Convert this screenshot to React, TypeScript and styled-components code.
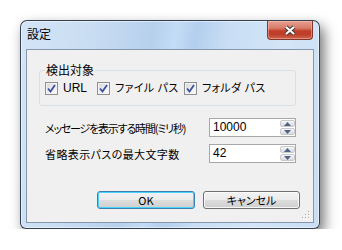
import React from 'react';
import styled, { createGlobalStyle } from 'styled-components';

const GlobalStyle = createGlobalStyle`
  html, body {
    margin: 0;
    padding: 0;
    background: #fff;
  }
  body {
    font-family: "Liberation Sans", "Noto Sans CJK JP", sans-serif;
    font-size: 12px;
    color: #000;
  }
`;

const Page = styled.div`
  padding: 20px 0 0 20px;
`;

const Window = styled.div`
  width: 300px;
  height: 209px;
  box-sizing: border-box;
  display: flex;
  flex-direction: column;
  padding: 0 5px 5px 5px;
  border: 1px solid rgba(25, 35, 50, 0.85);
  border-radius: 7px 7px 6px 6px;
  background: linear-gradient(
    100deg,
    #d3e4f6 0%,
    #c9ddf2 22%,
    #b6d0ec 40%,
    #c4dcf5 47%,
    #b3cfee 53%,
    #c9def4 63%,
    #d3e5f7 80%,
    #c9def4 100%
  );
  box-shadow:
    inset 0 0 0 1px rgba(255, 255, 255, 0.5),
    4px 6px 13px rgba(0, 0, 0, 0.55);
`;

const TitleBar = styled.div`
  height: 28px;
  display: flex;
  justify-content: space-between;
  align-items: flex-start;
`;

const Title = styled.div`
  padding: 5px 0 0 1px;
  line-height: 16px;
  font-family: "Noto Sans CJK JP", sans-serif;
`;

const CloseButton = styled.div`
  width: 46px;
  height: 19px;
  margin-right: 1px;
  box-sizing: border-box;
  display: flex;
  align-items: center;
  justify-content: center;
  border: 1px solid #82352b;
  border-top: none;
  border-radius: 0 0 4px 4px;
  background: linear-gradient(
    180deg,
    #e6a092 0%,
    #d97a68 40%,
    #c23f29 55%,
    #bd3f2a 75%,
    #d0664f 100%
  );
  box-shadow: inset 0 0 0 1px rgba(255, 200, 190, 0.45);
`;

const Client = styled.div`
  flex: 1;
  position: relative;
  display: flex;
  flex-direction: column;
  border: 1px solid #8497ad;
  background: #f0f0f0;
`;

const Group = styled.fieldset`
  margin: 13px 17px 0 12px;
  padding: 4px 5px 9px 5px;
  border: 1px solid #d5dfe5;
  border-radius: 3px;
  min-width: 0;
`;

const Legend = styled.legend`
  padding: 0 1px;
  line-height: 14px;
  font-family: "Noto Sans CJK JP", sans-serif;
`;

const CheckRow = styled.div`
  display: grid;
  grid-template-columns: 52px 87px auto;
  align-items: center;
`;

const CheckItem = styled.label`
  display: flex;
  align-items: center;
  gap: 5px;
  line-height: 15px;
  font-feature-settings: "palt";
  white-space: nowrap;
`;

const CheckText = styled.span`
  font-size: 11px;
  letter-spacing: 0.3px;
`;

const CheckBox = styled.span`
  width: 13px;
  height: 13px;
  box-sizing: border-box;
  display: flex;
  align-items: center;
  justify-content: center;
  border: 1px solid #8e8f8f;
  background: linear-gradient(135deg, #d6d6d6 0%, #f0f0f0 60%, #fbfbfb 100%);
  box-shadow: inset 0 0 0 1px #f4f4f4;
`;

const FieldRow = styled.div<{ $gap: number }>`
  margin-top: ${p => p.$gap}px;
  padding: 0 17px 0 18px;
  display: flex;
  align-items: center;
  justify-content: space-between;
  height: 19px;
`;

const FieldLabel = styled.span<{ $spacing: number }>`
  font-family: "Noto Sans CJK JP", sans-serif;
  font-size: 11px;
  font-feature-settings: "palt";
  letter-spacing: ${p => p.$spacing}px;
  white-space: nowrap;
`;

const SpinBox = styled.div`
  width: 87px;
  height: 19px;
  box-sizing: border-box;
  display: flex;
  border: 1px solid #a5a7ab;
  background: #fff;
`;

const SpinText = styled.span`
  flex: 1;
  padding-left: 3px;
  line-height: 17px;
`;

const SpinButtons = styled.div`
  width: 15px;
  display: flex;
  flex-direction: column;
  gap: 1px;
  padding: 1px 0;
`;

const SpinButton = styled.div`
  flex: 1;
  display: flex;
  align-items: center;
  justify-content: center;
  border: 1px solid #c6c9ce;
  border-radius: 2px;
  background: linear-gradient(180deg, #f6f6f6 0%, #e6e6e6 55%, #dadada 100%);
`;

const ButtonRow = styled.div`
  margin-top: auto;
  padding: 0 13px 13px 0;
  display: flex;
  justify-content: flex-end;
  gap: 8px;
`;

const Button = styled.div<{ $default?: boolean; $width: number }>`
  width: ${p => p.$width}px;
  height: 18px;
  box-sizing: border-box;
  display: flex;
  align-items: center;
  justify-content: center;
  border: 1px solid ${p => (p.$default ? '#3c7fb1' : '#707070')};
  border-radius: 3px;
  background: linear-gradient(180deg, #f2f2f2 0%, #ebebeb 50%, #dddddd 51%, #cfcfcf 100%);
  box-shadow: inset 0 0 0 1px ${p => (p.$default ? '#48d2fc' : 'rgba(255,255,255,0.8)')};
  font-family: "Noto Sans CJK JP", sans-serif;
  font-size: 11px;
  font-feature-settings: "palt";
  line-height: 16px;
`;

const Grip = styled.svg`
  position: absolute;
  right: 2px;
  bottom: 2px;
`;

const Check = () => (
  <svg width="9" height="9" viewBox="0 0 9 9">
    <polyline
      points="1,4.5 3.5,7.5 8,1"
      fill="none"
      stroke="#3b50a2"
      strokeWidth="1.8"
    />
  </svg>
);

const Arrow = ({ up }: { up?: boolean }) => (
  <svg width="7" height="4" viewBox="0 0 7 4">
    <polygon points={up ? '3.5,0 7,4 0,4' : '0,0 7,0 3.5,4'} fill="#4c6190" />
  </svg>
);

const Spinner = ({ value }: { value: string }) => (
  <SpinBox>
    <SpinText>{value}</SpinText>
    <SpinButtons>
      <SpinButton>
        <Arrow up />
      </SpinButton>
      <SpinButton>
        <Arrow />
      </SpinButton>
    </SpinButtons>
  </SpinBox>
);

const targets = ['URL', 'ファイル パス', 'フォルダ パス'];

const gripDots = [
  [8, 2],
  [8, 5],
  [5, 5],
  [8, 8],
  [5, 8],
  [2, 8]
];

export default function App() {
  return (
    <Page>
      <GlobalStyle />
      <Window>
        <TitleBar>
          <Title>設定</Title>
          <CloseButton>
            <svg width="14" height="11" viewBox="0 0 14 11">
              <path d="M3 2 L11 9 M11 2 L3 9" stroke="#3a3a3a" strokeWidth="4.2" />
              <path d="M3 2 L11 9 M11 2 L3 9" stroke="#fff" strokeWidth="2.2" />
            </svg>
          </CloseButton>
        </TitleBar>
        <Client>
          <Group>
            <Legend>検出対象</Legend>
            <CheckRow>
              {targets.map(t => (
                <CheckItem key={t}>
                  <CheckBox>
                    <Check />
                  </CheckBox>
                  {t === 'URL' ? t : <CheckText>{t}</CheckText>}
                </CheckItem>
              ))}
            </CheckRow>
          </Group>
          <FieldRow $gap={12}>
            <FieldLabel $spacing={-1.2}>メッセージを表示する時間(ミリ秒)</FieldLabel>
            <Spinner value="10000" />
          </FieldRow>
          <FieldRow $gap={7}>
            <FieldLabel $spacing={0.4}>省略表示パスの最大文字数</FieldLabel>
            <Spinner value="42" />
          </FieldRow>
          <ButtonRow>
            <Button $default $width={98}>OK</Button>
            <Button $width={97}>キャンセル</Button>
          </ButtonRow>
          <Grip width="11" height="11" viewBox="0 0 11 11">
            {gripDots.map(([x, y]) => (
              <g key={`${x}-${y}`}>
                <rect x={x + 1} y={y + 1} width="1" height="1" fill="#fff" />
                <rect x={x} y={y} width="1" height="1" fill="#a8a8a8" />
              </g>
            ))}
          </Grip>
        </Client>
      </Window>
    </Page>
  );
}
